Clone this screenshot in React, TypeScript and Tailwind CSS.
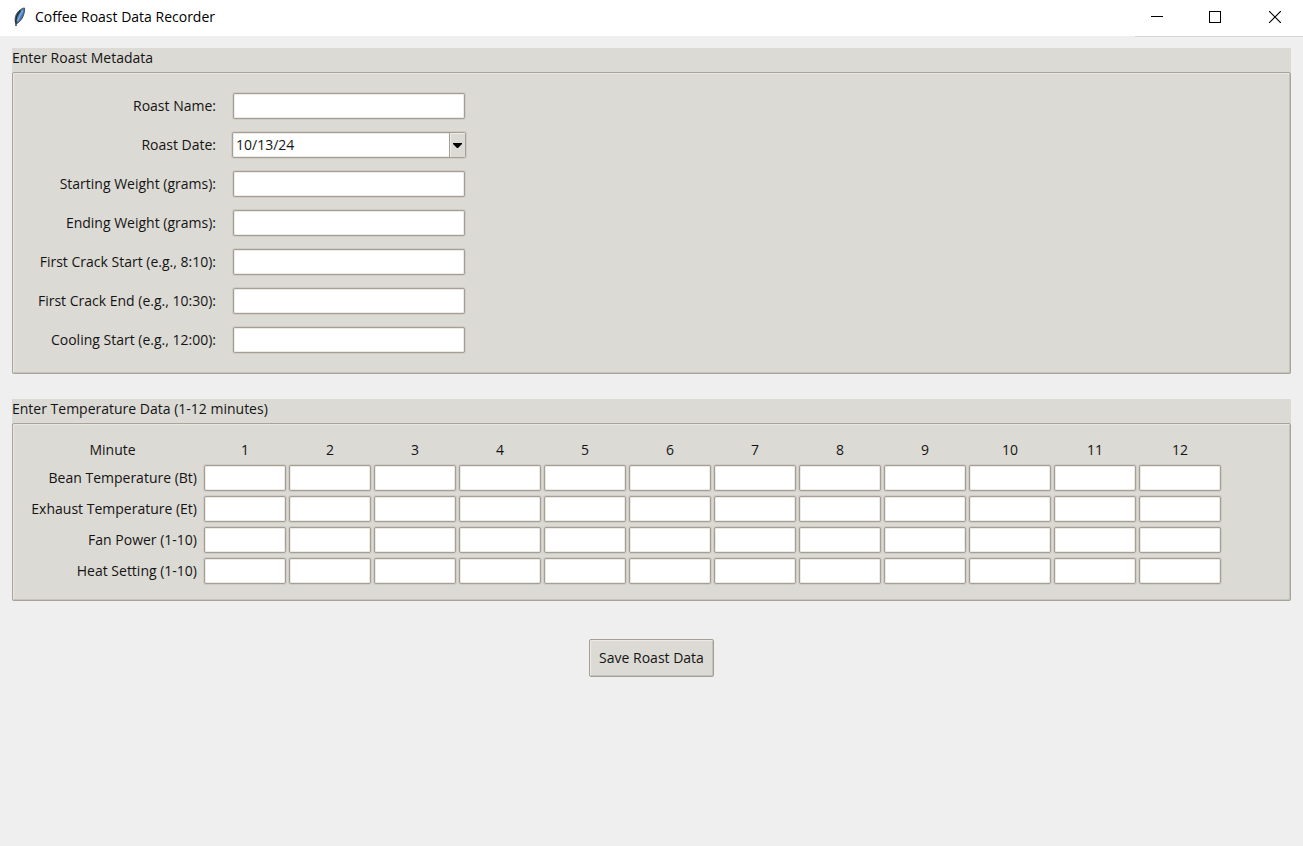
import { useState } from "react";
import type { ReactNode } from "react";

const metadataFields = [
  { id: "roast-name", label: "Roast Name:" },
  { id: "roast-date", label: "Roast Date:" },
  { id: "starting-weight", label: "Starting Weight (grams):" },
  { id: "ending-weight", label: "Ending Weight (grams):" },
  { id: "first-crack-start", label: "First Crack Start (e.g., 8:10):" },
  { id: "first-crack-end", label: "First Crack End (e.g., 10:30):" },
  { id: "cooling-start", label: "Cooling Start (e.g., 12:00):" },
];

const series = [
  "Bean Temperature (Bt)",
  "Exhaust Temperature (Et)",
  "Fan Power (1-10)",
  "Heat Setting (1-10)",
];

const minutes = Array.from({ length: 12 }, (_, i) => i + 1);

const box =
  "block h-[26px] rounded-[2px] border border-[#a39f96] bg-white px-[3px] shadow-[inset_0_0_0_1px_#eeebe7,0_0_0_1px_#cfccc5] outline-none";

function FeatherIcon() {
  return (
    <svg viewBox="0 0 14 20" className="h-5 w-3.5" aria-hidden="true">
      <path d="M12.500 1C10 1 6.500 3.500 4.500 7C3 9.800 2.800 13 3.600 16L5 16.500C8 14.500 10 12 11.200 9C12.300 6 12.800 3.500 12.500 1Z" fill="#4a7ab5" stroke="#4b4f54" strokeWidth="1" />
      <path d="M10.800 3.500C8.500 6.500 7.500 10 5.500 14" fill="none" stroke="#79aee6" strokeWidth="1.400" />
      <path d="M8.500 3.500C5 7.500 3.300 11 4 16V19" fill="none" stroke="#23272c" strokeWidth="1.300" />
    </svg>
  );
}

function TitleBar() {
  return (
    <header className="flex h-9 shrink-0 items-center bg-white pl-3">
      <div className="flex items-center gap-[9px] pb-0.5">
        <FeatherIcon />
        <h1 className="text-sm leading-5 text-black">Coffee Roast Data Recorder</h1>
      </div>
      <div className="ml-auto flex h-[37px] self-start border-b border-[#d6d6d6] bg-white pr-[5px] pb-0.5">
        <button aria-label="Minimize" className="grid w-11 place-items-center">
          <svg viewBox="0 0 12 12" className="size-3" shapeRendering="crispEdges">
            <path d="M0 5.500H12" stroke="#000" />
          </svg>
        </button>
        <button aria-label="Maximize" className="grid w-[72px] place-items-center">
          <svg viewBox="0 0 12 12" className="size-3" shapeRendering="crispEdges">
            <path d="M.5.5H11.500V11.500H.5Z" fill="none" stroke="#000" />
          </svg>
        </button>
        <button aria-label="Close" className="grid w-[47px] place-items-center">
          <svg viewBox="0 0 12 12" className="size-3">
            <path d="M0 0L12 12M12 0L0 12" stroke="#000" strokeWidth="1.200" />
          </svg>
        </button>
      </div>
    </header>
  );
}

function Panel({ id, title, children }: { id: string; title: string; children: ReactNode }) {
  return (
    <section aria-labelledby={id} className="bg-[#dcdad5]">
      <h2 id={id} className="h-6 text-sm leading-5">
        {title}
      </h2>
      <div className="rounded-[2px] border border-[#a8a49c] shadow-[inset_1px_1px_0_0_#e9e7e3,inset_-1px_-1px_0_0_#c6c2bc]">
        {children}
      </div>
    </section>
  );
}

function DateSelect({ id }: { id: string }) {
  const [date, setDate] = useState("10/13/24");
  return (
    <div className="relative -mx-[1px]">
      <select
        id={id}
        value={date}
        onChange={(e) => setDate(e.target.value)}
        className={`${box} w-full appearance-none`}
      >
        <option>10/13/24</option>
        <option>10/14/24</option>
      </select>
      <span className="pointer-events-none absolute inset-y-[1px] right-[1px] grid w-4 place-items-center border-l border-[#a39f96] bg-[#dcdad5] shadow-[inset_1px_1px_0_0_#eeebe7]">
        <svg viewBox="0 0 9 5" className="h-[5px] w-[9px]">
          <path d="M0 0H9V1L5 5H4L0 1Z" fill="#000" />
        </svg>
      </span>
    </div>
  );
}

export default function App() {
  return (
    <div className="flex min-h-screen flex-col bg-[#efefef] font-['Open_Sans','Noto_Sans',sans-serif] text-sm text-[#141414]">
      <TitleBar />
      <main className="flex flex-col px-3 pt-3">
        <Panel id="metadata-title" title="Enter Roast Metadata">
          <div className="grid grid-cols-[203px_232px] gap-x-[17px] gap-y-[13px] pt-5 pb-5">
            {metadataFields.map(({ id, label }) => (
              <div key={id} className="contents">
                <label htmlFor={id} className="text-right leading-[26px] whitespace-nowrap">
                  {label}
                </label>
                {id === "roast-date" ? (
                  <DateSelect id={id} />
                ) : (
                  <input id={id} type="text" className={`${box} w-full`} />
                )}
              </div>
            ))}
          </div>
        </Panel>

        <div className="mt-[25px]">
          <Panel id="temperature-title" title="Enter Temperature Data (1-12 minutes)">
            <table className="mt-[11px] mb-[11px] ml-3 border-separate border-spacing-x-[3px] border-spacing-y-[5px]">
              <thead>
                <tr>
                  <th scope="col" className="w-[173px] p-0 pr-1 text-center leading-5 font-normal">
                    Minute
                  </th>
                  {minutes.map((m) => (
                    <th key={m} scope="col" className="p-0 text-center leading-5 font-normal">
                      {m}
                    </th>
                  ))}
                </tr>
              </thead>
              <tbody>
                {series.map((name) => (
                  <tr key={name}>
                    <th scope="row" className="p-0 pr-1 text-right leading-[26px] font-normal whitespace-nowrap">
                      {name}
                    </th>
                    {minutes.map((m) => (
                      <td key={m} className="p-0">
                        <input type="text" aria-label={`${name}, minute ${m}`} className={`${box} w-[82px]`} />
                      </td>
                    ))}
                  </tr>
                ))}
              </tbody>
            </table>
          </Panel>
        </div>

        <button className="mt-[38px] h-[38px] self-center rounded-[2px] border border-[#a39f96] bg-[#dcdad5] px-[9px] shadow-[inset_1px_1px_0_0_#eeebe7,inset_-1px_-1px_0_0_#c6c2bc]">
          Save Roast Data
        </button>
      </main>
    </div>
  );
}
